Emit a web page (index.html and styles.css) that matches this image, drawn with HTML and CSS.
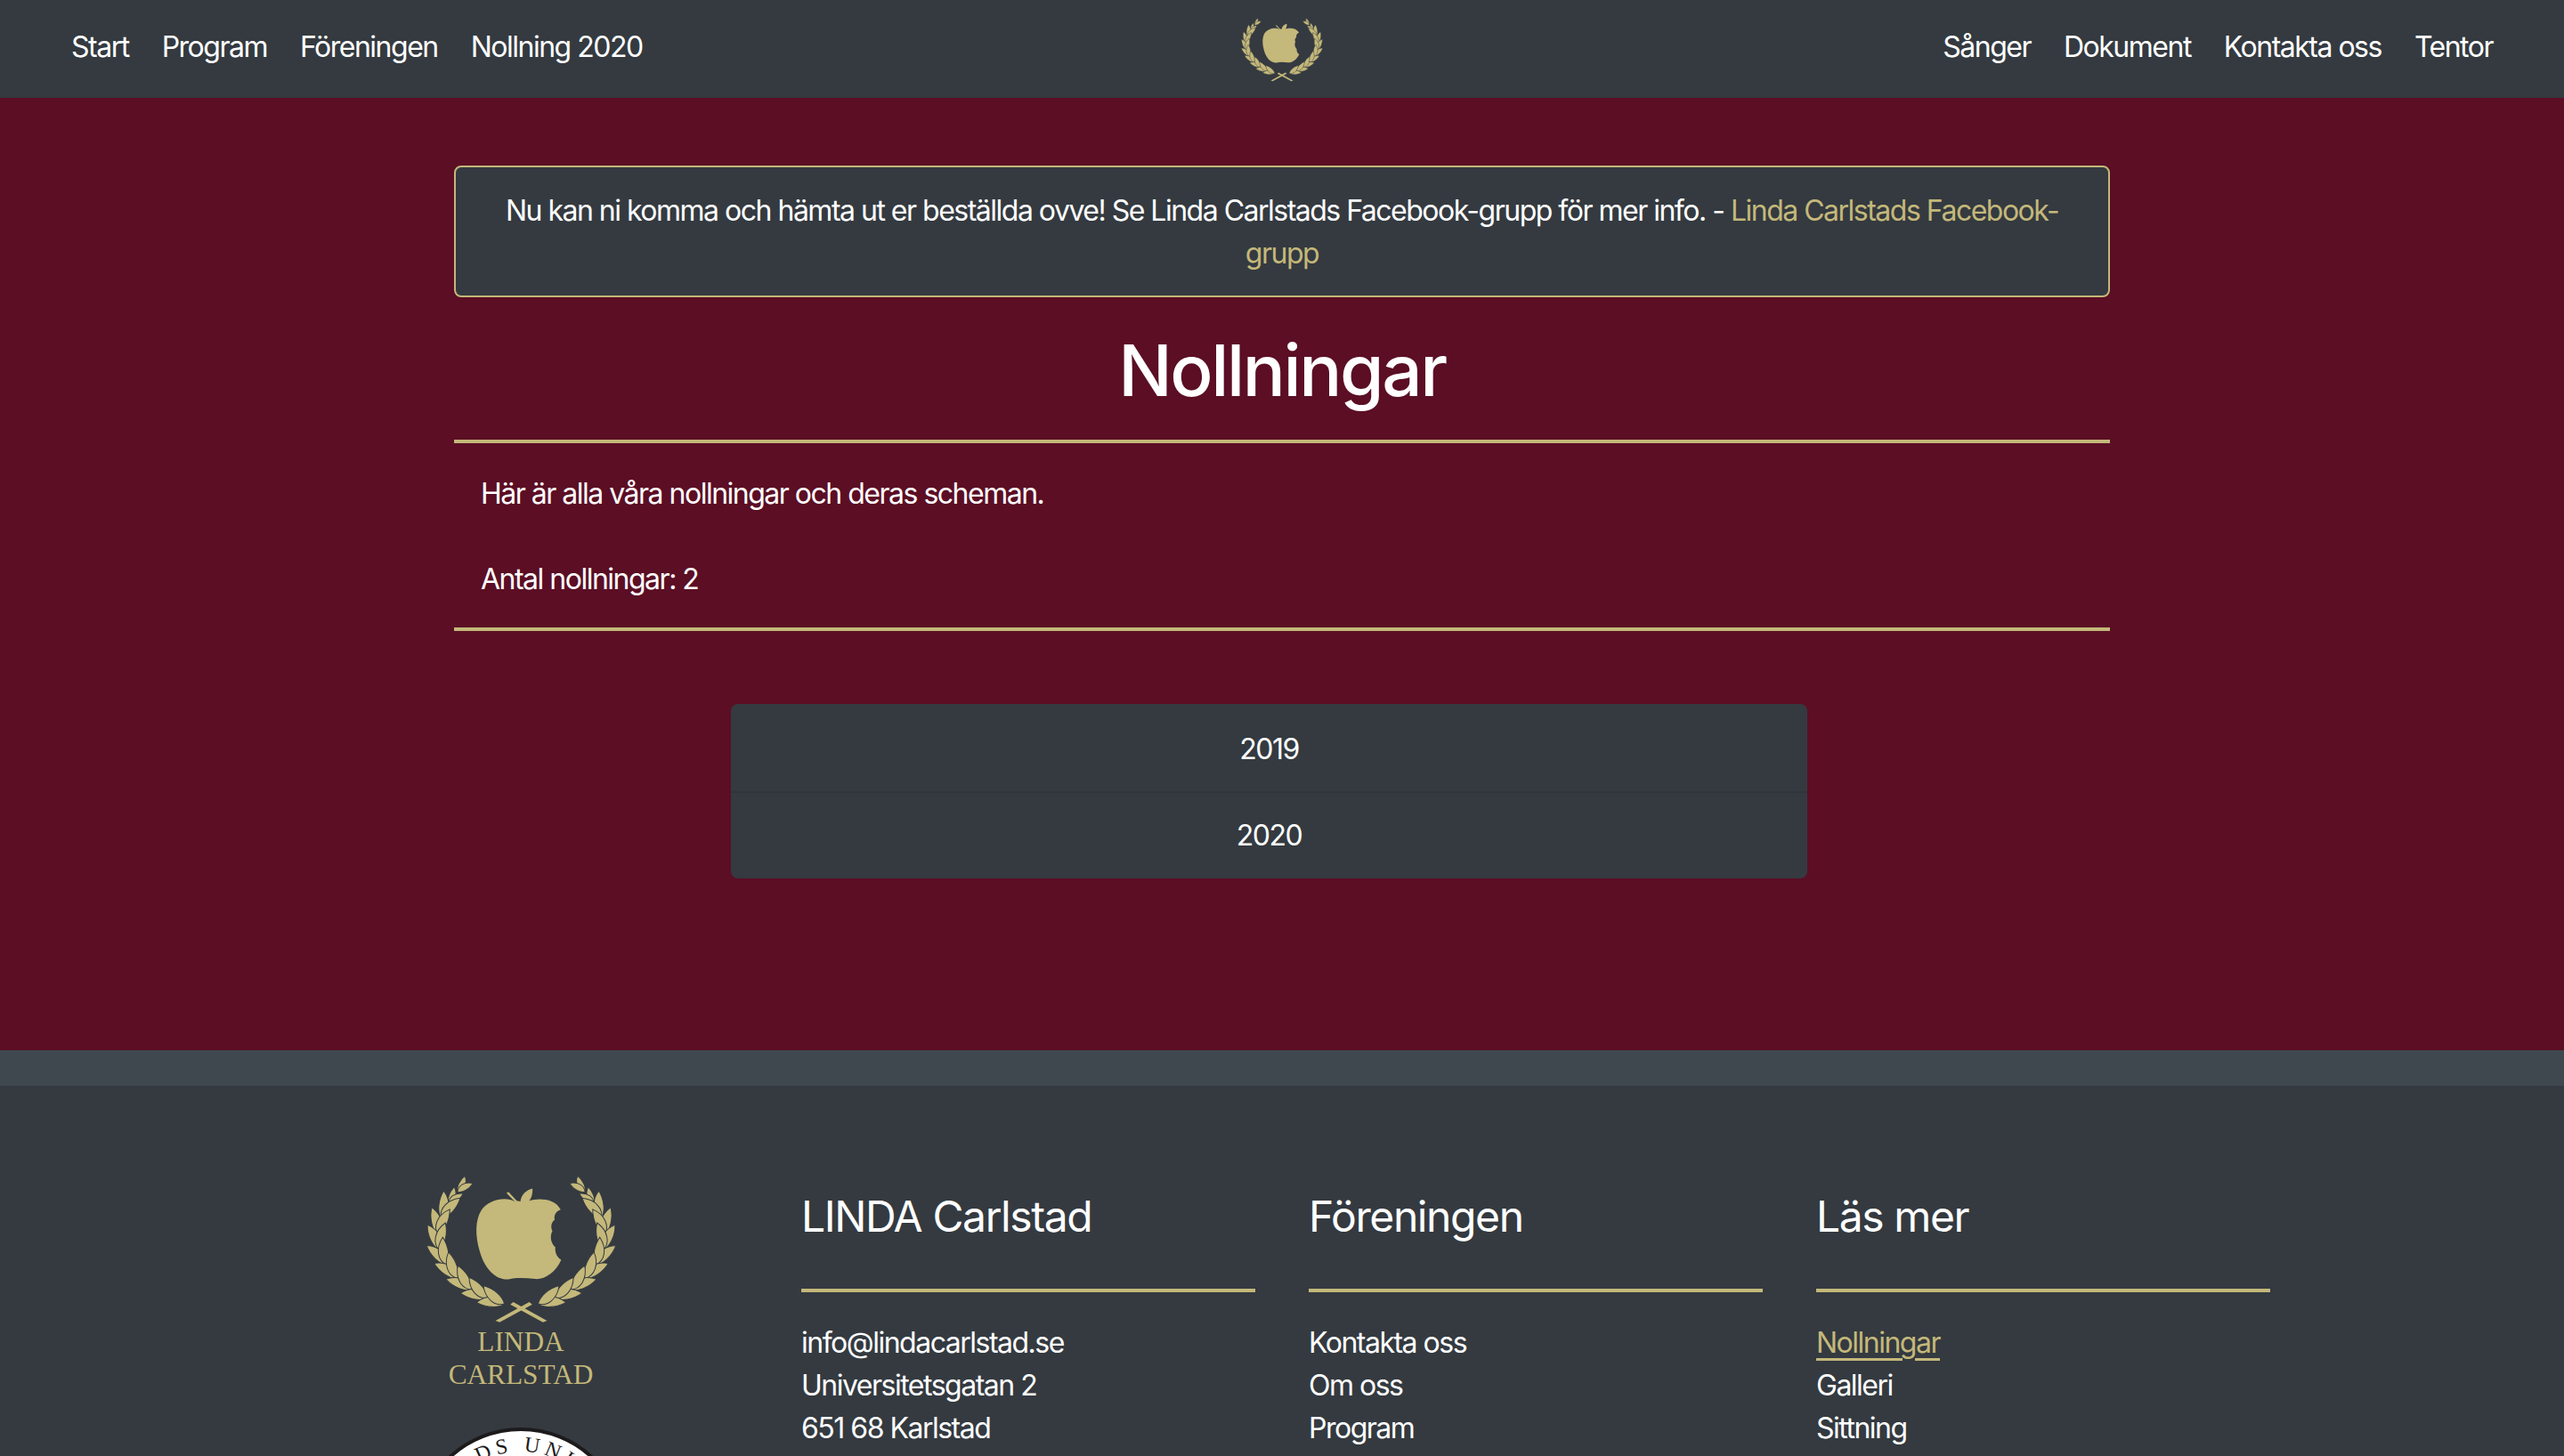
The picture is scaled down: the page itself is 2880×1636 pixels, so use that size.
FILE: index.html
```html
<!DOCTYPE html>
<html lang="sv">

<head>
    <meta charset="UTF-8">
    <meta name="viewport" content="width=device-width, initial-scale=1.0">
    <title>Nollningar</title>
    <link rel="stylesheet" href="styles.css">
</head>

<body>
    <svg class="defs" aria-hidden="true">
        <defs>
            <g id="leaf__pair" stroke="#343a40" stroke-width="3">
                <path transform="rotate(-19)" d="M0 0C-18 -28 -60 -30 -94 0C-60 17 -18 15 0 0Z" />
                <path transform="rotate(19)" d="M0 0C-18 -15 -60 -17 -94 0C-60 30 -18 28 0 0Z" />
            </g>
            <g id="leaf__small" stroke="#343a40" stroke-width="3">
                <path transform="rotate(-18)" d="M0 0C-12 -18 -38 -20 -60 0C-38 12 -12 10 0 0Z" />
                <path transform="rotate(18)" d="M0 0C-12 -10 -38 -12 -60 0C-38 20 -12 18 0 0Z" />
            </g>
            <g id="laurel__branch">
                <use href="#leaf__small" transform="translate(220 118) rotate(133)" />
                <use href="#leaf__small" transform="translate(190 158) rotate(127)" />
                <use href="#leaf__pair" transform="translate(165 208) rotate(114)" />
                <use href="#leaf__pair" transform="translate(154 262) rotate(96)" />
                <use href="#leaf__pair" transform="translate(158 314) rotate(84)" />
                <use href="#leaf__pair" transform="translate(183 364) rotate(63)" />
                <use href="#leaf__pair" transform="translate(220 410) rotate(52)" />
                <use href="#leaf__pair" transform="translate(268 448) rotate(41)" />
                <use href="#leaf__pair" transform="translate(322 476) rotate(29)" />
                <use href="#leaf__pair" transform="translate(378 496) rotate(22)" />
                <path d="M522 553L508 558L398 498L408 490Z" />
            </g>
            <symbol id="crest" viewBox="100 40 670 530">
                <use href="#laurel__branch" />
                <use href="#laurel__branch" transform="translate(870 0) scale(-1 1)" />
                <path d="M432 150C436 126 452 112 473 107C474 124 470 138 462 148C490 139 548 138 568 178C552 182 544 198 548 212C535 222 534 238 540 250C530 270 536 292 550 305C548 322 556 340 570 347C552 388 516 414 482 412C450 408 420 406 392 413C350 416 312 378 296 322C278 264 280 212 300 180C324 144 386 132 414 152L385 122L392 118L420 148Z" />
            </symbol>
        </defs>
    </svg>

    <header class="topbar">
        <nav class="topbar__links">
            <a href="#">Start</a>
            <a href="#">Program</a>
            <a href="#">Föreningen</a>
            <a href="#">Nollning 2020</a>
        </nav>
        <a class="topbar__logo" href="#" aria-label="LINDA Carlstad">
            <svg class="crest"><use href="#crest" /></svg>
        </a>
        <nav class="topbar__links topbar__links--right">
            <a href="#">Sånger</a>
            <a href="#">Dokument</a>
            <a href="#">Kontakta oss</a>
            <a href="#">Tentor</a>
        </nav>
    </header>

    <main class="content">
        <div class="notice">
            Nu kan ni komma och hämta ut er beställda ovve! Se Linda Carlstads Facebook-grupp för mer info. - <a href="#">Linda Carlstads Facebook-grupp</a>
        </div>
        <h1 class="content__title">Nollningar</h1>
        <hr class="rule">
        <p class="content__text">Här är alla våra nollningar och deras scheman.</p>
        <p class="content__text">Antal nollningar: 2</p>
        <hr class="rule">
        <div class="years">
            <a class="years__item" href="#">2019</a>
            <a class="years__item" href="#">2020</a>
        </div>
    </main>

    <div class="strip"></div>

    <footer class="footer">
        <div class="footer__brand">
            <svg class="footer__crest"><use href="#crest" /></svg>
            <div class="footer__name">LINDA<br>CARLSTAD</div>
            <svg class="seal" viewBox="0 0 240 240" role="img" aria-label="Karlstads universitet">
                <circle cx="120" cy="120" r="117" />
                <path id="seal__ring" d="M120 212A92 92 0 1 1 120 28A92 92 0 1 1 120 212" />
                <text text-anchor="end"><textPath href="#seal__ring" startOffset="48.5%">KARLSTADS</textPath></text>
                <text><textPath href="#seal__ring" startOffset="50.5%">UNIVERSITET</textPath></text>
            </svg>
        </div>
        <section class="footer__col">
            <h4>LINDA Carlstad</h4>
            <hr class="rule rule--footer">
            <p>info@lindacarlstad.se</p>
            <p>Universitetsgatan 2</p>
            <p>651 68 Karlstad</p>
        </section>
        <section class="footer__col">
            <h4>Föreningen</h4>
            <hr class="rule rule--footer">
            <a href="#">Kontakta oss</a>
            <a href="#">Om oss</a>
            <a href="#">Program</a>
        </section>
        <section class="footer__col">
            <h4>Läs mer</h4>
            <hr class="rule rule--footer">
            <a class="is-active" href="#">Nollningar</a>
            <a href="#">Galleri</a>
            <a href="#">Sittning</a>
        </section>
    </footer>
</body>

</html>
```
FILE: styles.css
```css
* {
    margin: 0;
    padding: 0;
    box-sizing: border-box;
}

body {
    height: 100vh;
    overflow: hidden;
    background-color: #343a40;
    color: #fff;
    font-family: "Inter", "Liberation Sans", sans-serif;
    font-size: 32px;
    line-height: 48px;
    letter-spacing: -1.5px;
}

a {
    color: inherit;
    text-decoration: none;
}

.defs {
    display: none;
}

/* topbar */
.topbar {
    display: grid;
    grid-template-columns: 1fr auto 1fr;
    align-items: center;
    height: 110px;
    padding: 0 80px;
    background-color: #343a40;
}

.topbar__links {
    display: flex;
    gap: 37px;
    padding-bottom: 4px;
}

.topbar__links--right {
    justify-content: flex-end;
}

.topbar__logo {
    display: block;
    height: 76px;
}

.crest {
    display: block;
    width: 96px;
    height: 76px;
    fill: #c4b87a;
}

/* content */
.content {
    height: 1070px;
    padding: 76px 510px 0;
    background-color: #5b0e24;
}

.notice {
    padding: 25px 40px 23px;
    border: 2px solid #c4b87a;
    border-radius: 8px;
    background-color: #343a40;
    text-align: center;
}

.notice a {
    color: #c4b87a;
}

.content__title {
    margin-top: 34px;
    font-size: 80px;
    font-weight: 500;
    line-height: 96px;
    letter-spacing: -2.4px;
    text-align: center;
}

.rule {
    height: 4px;
    margin: 30px 0 33px;
    border: 0;
    background-color: #c4b87a;
}

.content__text {
    margin-bottom: 48px;
    padding: 0 30px;
}

.content__text:last-of-type {
    margin-bottom: 0;
}

.years {
    width: 1209px;
    margin: 82px 0 0 311px;
    border-radius: 8px;
    overflow: hidden;
}

.years__item {
    display: block;
    height: 98px;
    padding-top: 27px;
    background-color: #343a40;
    text-align: center;
}

.years__item + .years__item {
    padding-top: 24px;
    border-top: 2px solid #2f3539;
}

.strip {
    height: 40px;
    background-color: #3f474f;
}

/* footer */
.footer {
    display: grid;
    grid-template-columns: repeat(4, 570px);
    padding: 93px 300px 0;
}

.footer__brand {
    display: flex;
    flex-direction: column;
    align-items: center;
}

.footer__crest {
    width: 223px;
    height: 177px;
    fill: #c4b87a;
}

.footer__name {
    margin-top: -1px;
    color: #c4b87a;
    font-family: "Liberation Serif", serif;
    font-size: 31.3px;
    line-height: 37px;
    letter-spacing: 0;
    text-align: center;
}

.seal {
    flex: none;
    width: 240px;
    height: 240px;
    margin-top: 40px;
}

.seal circle {
    fill: #fff;
    stroke: #1d1a1c;
    stroke-width: 4;
}

.seal path {
    fill: none;
}

.seal text {
    fill: #1d1a1c;
    font-family: "Liberation Serif", serif;
    font-size: 24px;
    letter-spacing: 5px;
}

.footer__col {
    padding: 25px 30px 0;
}

.footer__col h4 {
    font-size: 48px;
    font-weight: 400;
    line-height: 58px;
    letter-spacing: -1.4px;
}

.rule--footer {
    margin: 52px 0 33px;
}

.footer__col a {
    display: block;
}

.footer__col .is-active {
    color: #c4b87a;
}

.is-active {
    text-decoration: underline;
    text-decoration-thickness: 3px;
    text-underline-offset: 6px;
}
```
